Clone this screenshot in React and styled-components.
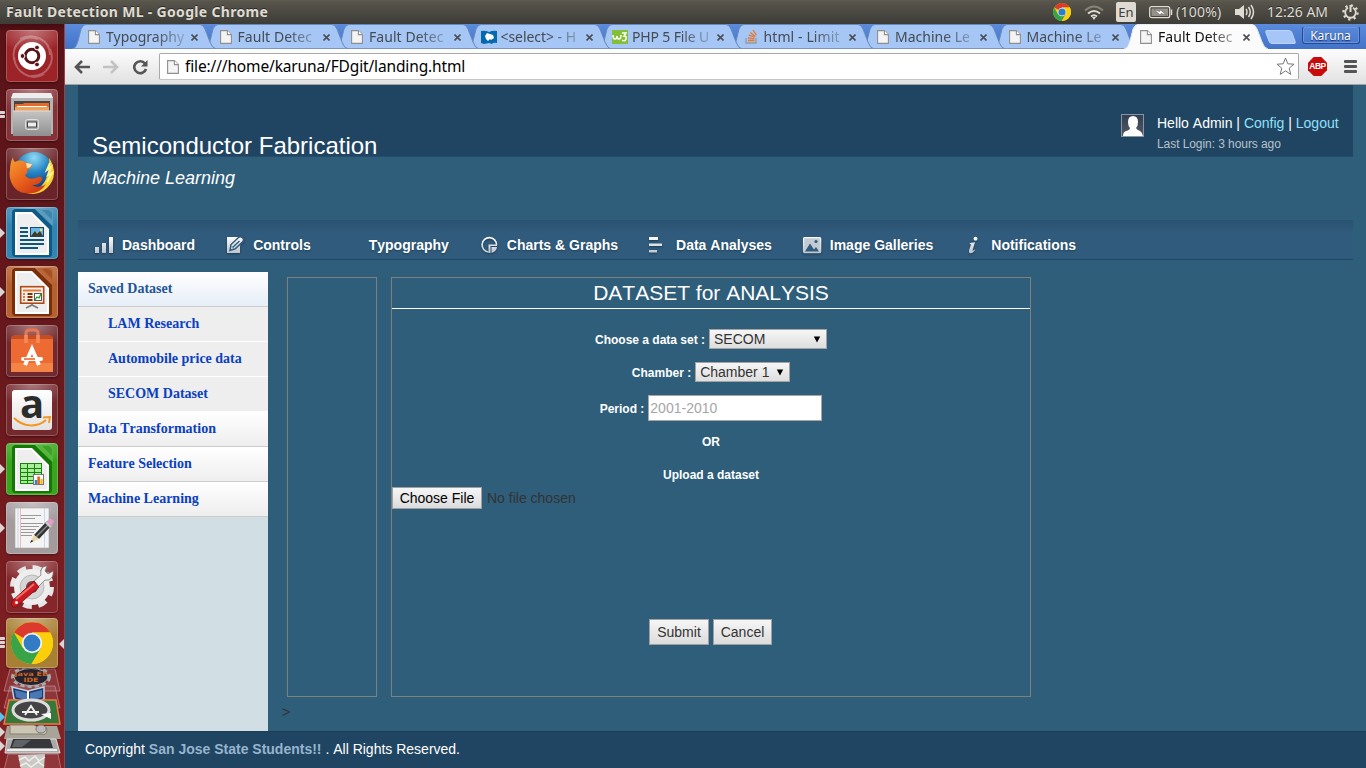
import React from "react";
import styled, { createGlobalStyle } from "styled-components";

const SANS = '"Liberation Sans", Arial, sans-serif';
const SERIF = '"Liberation Serif", "Times New Roman", serif';
const SYSTEM = '"Noto Sans", "Open Sans", sans-serif';

const GlobalStyle = createGlobalStyle`
  * { box-sizing: border-box; }
  html, body { margin: 0; padding: 0; height: 768px; overflow: hidden; }
  svg { display: block; flex: none; }
`;

/* ---------- desktop shell ---------- */

const Desktop = styled.div`
  width: 1366px;
  height: 768px;
  display: flex;
  flex-direction: column;
  overflow: hidden;
  font-family: ${SANS};
`;

const Panel = styled.header`
  height: 24px;
  flex: none;
  display: flex;
  align-items: center;
  justify-content: space-between;
  padding: 0 7px 0 6px;
  background: linear-gradient(#5d5a4f 0, #55534a 3px, #3d3c37 100%);
  color: #dfdbd2;
  font: 14px/24px ${SYSTEM};
  text-shadow: 0 -1px 0 #2c2b28;
`;

const WindowTitle = styled.div`
  font-weight: 700;
  font-size: 14px;
  letter-spacing: 0.32px;
  white-space: nowrap;
`;

const Indicators = styled.div`
  display: flex;
  align-items: center;
  height: 24px;
`;

const PanelText = styled.span`
  width: ${(p) => p.$w}px;
  margin-left: ${(p) => p.$gap}px;
  letter-spacing: ${(p) => p.$ls || 0}px;
  white-space: nowrap;
`;

const IndicatorIcon = styled.span`
  margin-left: ${(p) => p.$gap || 0}px;
`;

const LanguageBadge = styled.span`
  width: 20px;
  height: 20px;
  margin-left: 12px;
  border-radius: 2px;
  background: #dfdbd2;
  color: #3c3b37;
  font-size: 13px;
  line-height: 20px;
  text-align: center;
  text-shadow: none;
`;

const Workspace = styled.div`
  flex: 1;
  min-height: 0;
  display: flex;
`;

/* ---------- launcher ---------- */

const Launcher = styled.aside`
  width: 65px;
  flex: none;
  display: flex;
  flex-direction: column;
  align-items: center;
  padding-top: 6px;
  background: linear-gradient(#460b10 0, #591317 8px, #5f161a 180px, #6c191d 400px, #7c1f22 600px, #842124 100%);
  border-right: 1px solid #974448;
  overflow: hidden;
`;

const Tile = styled.div`
  position: relative;
  flex: none;
  width: 52px;
  height: 52px;
  margin-bottom: 7px;
  display: flex;
  align-items: center;
  justify-content: center;
  border-radius: 4px;
  background: radial-gradient(ellipse 70% 45% at 50% 0, rgba(255, 255, 255, 0.38), transparent), ${(p) => p.$bg};
  box-shadow: inset 0 0 0 1px rgba(255, 255, 255, 0.22), 0 1px 2px rgba(0, 0, 0, 0.4);
`;

const ChromeTile = styled(Tile)`
  height: 50px;
  margin: -2px 0 0;
  z-index: 1;
`;

const Pip = styled.i`
  position: absolute;
  left: -6px;
  top: 21px;
  width: 5px;
  height: 10px;
  background: #dcd3d3;
  clip-path: polygon(0 0, 100% 50%, 0 100%);
`;

const PipRight = styled(Pip)`
  left: 53px;
  clip-path: polygon(100% 0, 0 50%, 100% 100%);
`;

const PipBars = styled.span`
  position: absolute;
  left: -6px;
  top: ${(p) => (p.$n === 3 ? 19 : 22)}px;
  display: flex;
  flex-direction: column;
  gap: 1px;
`;

const PipBar = styled.i`
  width: 5px;
  height: 3px;
  border-radius: 0 1px 1px 0;
  background: #dcd3d3;
`;

function Bars({ n }) {
  return (
    <PipBars $n={n}>
      {Array.from({ length: n }, (_, i) => <PipBar key={i} />)}
    </PipBars>
  );
}

function DashIcon() {
  return (
    <svg width="52" height="52" viewBox="0 0 52 52" fill="none">
      <path d="M8 30C5 14 18 4 32 9M44 19c6 14-4 28-19 27M14 9C28 2 44 10 44 25M38 44C25 52 9 42 8 27" stroke="#fff" strokeOpacity=".28" strokeWidth="2" />
      <circle cx="26" cy="26" r="14" fill="#fff" />
      <circle cx="26" cy="26" r="6.800" stroke="#591317" strokeWidth="3" />
      <g fill="#591317" stroke="#fff" strokeWidth="1"><circle cx="16.500" cy="26" r="2.400" /><circle cx="31" cy="17.500" r="2.400" /><circle cx="31" cy="34.500" r="2.400" /></g>
    </svg>
  );
}

function FilesIcon() {
  return (
    <svg width="52" height="52" viewBox="0 0 52 52">
      <defs><linearGradient id="fi" x2="0" y2="1"><stop stopColor="#c4c4c4" /><stop offset="1" stopColor="#8f8f8f" /></linearGradient></defs>
      <path d="M7 4h38l2 6v35H5V10z" fill="#b4b4b4" />
      <path d="M7 4h38l2 5H5z" fill="#eee" />
      <rect x="8" y="12" width="36" height="12" fill="#4a4440" />
      <path d="M9 15h8l1-1h25v9H9z" fill="#e4692a" /><path d="M9 18h34v6H9z" fill="#efa25a" /><path d="M11 17h30v1H11z" fill="#fff" />
      <path d="M7 22h38v25H7z" fill="url(#fi)" /><path d="M7 21.5h38v1H7z" fill="#ddd" />
      <rect x="19.5" y="30.500" width="13" height="10" rx="2" fill="#aaa" stroke="#e0e0e0" />
      <rect x="21.500" y="33" width="9" height="5" fill="#eee" stroke="#444" />
    </svg>
  );
}

function FirefoxIcon() {
  return (
    <svg width="52" height="52" viewBox="0 0 52 52">
      <defs>
        <radialGradient id="fg" cx=".5" cy=".15" r=".8"><stop stopColor="#8fdcf5" /><stop offset=".5" stopColor="#2583c4" /><stop offset="1" stopColor="#133a7c" /></radialGradient>
        <linearGradient id="ff" x2=".7" y2="1"><stop stopColor="#f7a130" /><stop offset=".6" stopColor="#e8601c" /><stop offset="1" stopColor="#cf3a15" /></linearGradient>
      </defs>
      <circle cx="28" cy="23" r="19" fill="url(#fg)" />
      <path d="M43 10c7 10 7 22-2 30-6 6-14 7-20 5 9-1 16-7 19-14 3-7 4-14 3-21z" fill="#f8d035" />
      <path d="M44 15l-3 7 4-3-3 8 4-2-5 9" fill="none" stroke="#fff38c" strokeWidth="2" />
      <path d="M7 9c0 3 1 4 2 5 4-2 8-2 11 1l6 1c0 3-2 5-5 6 1 2 0 4-2 5 3 5 8 4 13 2 3-1 5 1 4 3-3 5-7 5-10 5 4 3 10 2 14-1-4 7-12 11-21 9C8 44 2 32 4 22c0-5 1-9 3-13z" fill="url(#ff)" />
      <path d="M20 15l6 1c-1 3-3 4-5 4z" fill="#ffe3b0" />
    </svg>
  );
}

function OfficeDoc({ frame, corner, children }) {
  return (
    <svg width="52" height="52" viewBox="0 0 52 52">
      <path d="M10 2h19l17 17v28q0 3-3 3H10q-4 0-4-4V6q0-4 4-4z" fill={frame} />
      <path d="M30 2h14q3 0 3 3v14z" fill={corner} />
      <path d="M36 3h7l3 3v7z" fill={frame} fillOpacity=".35" />
      <path d="M9 5h17l17 17v26H9z" fill="#fff" />
      <path d="M11 7h14l16 16v23H11z" fill="#eee" />
      {children}
    </svg>
  );
}

const WriterIcon = () => (
  <OfficeDoc frame="#0c5a86" corner="#5b9dc1">
    <path d="M14 21h8m-8 4h8m-8 4h8m-8 4h24m-24 4h24m-24 4h18" stroke="#0e557f" strokeWidth="1.900" />
    <rect x="24.500" y="20.500" width="13" height="9" fill="#6ab7e5" stroke="#164a6c" />
    <path d="M25 29l4-5 2 3 3-3 3 5z" fill="#3f3c22" /><circle cx="35" cy="23" r="1.200" fill="#ffe25e" />
  </OfficeDoc>
);

const ImpressIcon = () => (
  <OfficeDoc frame="#7d2e08" corner="#b96535">
    <rect x="14.700" y="20.700" width="23" height="16.500" fill="#fff1e7" stroke="#ad4a19" strokeWidth="1.600" />
    <path d="M17 23.500h18v2H17z" fill="#df7c44" /><path d="M21.500 28h5m-5 3h5m-5 3h5" stroke="#842f09" strokeWidth="1.800" /><path d="M17 28h2m-2 3h2m-2 3h2" stroke="#df7c44" strokeWidth="1.800" />
    <rect x="28.500" y="27.500" width="7" height="7" fill="#fff" stroke="#555" /><path d="M29 34l2-3 2 1 2-4" fill="none" stroke="#14a31c" strokeWidth="1.300" />
    <path d="M26 38v2m0-1l-6 3m6-3l6 3" stroke="#777" strokeWidth="1.500" />
  </OfficeDoc>
);

const CalcIcon = () => (
  <OfficeDoc frame="#147806" corner="#54b73c">
    <rect x="14.500" y="20.500" width="21" height="20" fill="#a8ec9c" stroke="#168306" />
    <path d="M14 25.500h22M14 29.500h22M14 33.500h22M14 37.500h22M21.500 20v21M28.500 20v21" stroke="#168306" />
    <rect x="27.500" y="31.500" width="10" height="10" fill="#fff" stroke="#777" /><path d="M30 41v-4" stroke="#2687d5" strokeWidth="2.500" /><path d="M32.600 41v-7.500" stroke="#e05d11" strokeWidth="2.500" /><path d="M35.500 41v-5" stroke="#f6b700" strokeWidth="2.200" />
  </OfficeDoc>
);

function SoftwareIcon() {
  return (
    <svg width="52" height="52" viewBox="0 0 52 52" fill="none">
      <path d="M5 12l3-2h36l3 2v4H5z" fill="#c44e20" />
      <path d="M20 18V8q0-3 4-3h4q4 0 4 3v10" stroke="#eb7650" strokeWidth="3" />
      <path d="M5 14h42v33H5z" fill="#ed6a33" /><path d="M5 38h42v9H5z" fill="#f48445" />
      <path d="M20 10v8m12-8v8" stroke="#f28b62" strokeWidth="3.500" />
      <path d="M19 40l7-16 7 16" stroke="#fff" strokeWidth="4" /><path d="M17 34h18" stroke="#fff" strokeWidth="4" strokeLinecap="round" /><path d="M18 34h11" stroke="#ed5a22" strokeWidth="1.500" />
    </svg>
  );
}

const AmazonPlate = styled.div`
  width: 40px;
  height: 40px;
  border-radius: 3px;
  background: linear-gradient(#fff, #e2e2e2);
  display: flex;
  flex-direction: column;
  align-items: center;
  color: #2c2c2c;
  font: 700 40px/26px "Open Sans", sans-serif;
`;

function AmazonIcon() {
  return (
    <AmazonPlate>
      a
      <svg width="40" height="12" viewBox="0 0 40 12" fill="none">
        <path d="M2 2c9 9 23 10 32 2" stroke="#f6941d" strokeWidth="2" /><path d="M31 1.500l7-.5-1 6" stroke="#f6941d" strokeWidth="1.800" />
      </svg>
    </AmazonPlate>
  );
}

function EditorIcon() {
  return (
    <svg width="52" height="52" viewBox="0 0 52 52" fill="none">
      <path d="M9 6h34v40H9z" fill="#f4f4f4" stroke="#aaa" strokeWidth=".6" />
      <path d="M14.500 6v40" stroke="#f3a9aa" strokeWidth=".8" /><path d="M38.500 6v40M12 6v40" stroke="#b2cbea" strokeWidth=".7" />
      <path d="M15 13.500h20M15 16.500h14m-14 5h22M15 24.500h18M15 27.500h15M15 30.500h13M15 33.500h11" stroke="#999" strokeWidth="1" />
      <path d="M28 33L41 19l4.500 4.500L33 37z" fill="#333" /><path d="M30 35l13-13" stroke="#8b8b8b" strokeWidth="1.400" />
      <path d="M28 33l-4 8 9-4z" fill="#e8d8a8" /><path d="M24 41l1.500-3 2 1z" fill="#222" />
      <path d="M39 21l2-2 5 5-2 2z" fill="#c7c7c7" /><path d="M41 19l2-2q2-1 4 1t0 3l-2 3z" fill="#e79bc6" />
    </svg>
  );
}

function SettingsIcon() {
  return (
    <svg width="52" height="52" viewBox="0 0 52 52" fill="none">
      <circle cx="26" cy="26" r="19" stroke="#e6e6e6" strokeWidth="6" strokeDasharray="8.500 6.420" />
      <circle cx="26" cy="26" r="15" fill="#ddd" stroke="#eee" strokeWidth="6" />
      <circle cx="26" cy="26" r="12" fill="#d6d6d6" stroke="#bbb" strokeWidth="1" /><circle cx="26" cy="26" r="6" fill="#7a4042" />
      <path d="M28 20l7-6c-1-5 1-9 6-9l-2 5 3 3 5-3c1 6-3 10-8 9l-7 7z" fill="#f0f0f0" stroke="#777" strokeWidth=".8" />
      <path d="M28 20l5 6-23 20q-6 1-4-6z" fill="#cb1a20" stroke="#82090e" strokeWidth=".8" /><path d="M10 38l18-15" stroke="#f16c6c" strokeWidth="2" />
      <circle cx="10.500" cy="41.500" r="1.500" fill="#fff" />
    </svg>
  );
}

function ChromeLogo({ size }) {
  return (
    <svg width={size} height={size} viewBox="0 0 42 42">
      <circle cx="21" cy="21" r="21" fill="#f9cf0a" />
      <path d="M21 21L3 10.500A21 21 0 0 1 39.200 10.500H21z" fill="#dc3a2d" />
      <path d="M21 21l-9.200 5L2.800 10.500A21 21 0 0 0 20.500 42L30 26z" fill="#39a447" />
      <path d="M39.200 10.500H21L30 26l-9.500 16A21 21 0 0 0 39.200 10.500z" fill="#fbcf0c" />
      <circle cx="21" cy="21" r="10.200" fill="#f1f1f1" /><circle cx="21" cy="21" r="8.400" fill="#317cc4" />
    </svg>
  );
}

function FoldedStack() {
  return (
    <svg width="65" height="101" viewBox="0 0 65 101" fill="none">
      <g stroke="#d7a9ab" strokeOpacity=".5" fill="#fff" fillOpacity=".1">
        <path d="M10 1h45l5 22H4z" /><path d="M10 18h45l5 22H4z" /><path d="M8 86h50l4 20H3z" />
      </g>
      <ellipse cx="31" cy="9" rx="18" ry="9" stroke="#aaa" strokeWidth="4" strokeDasharray="4 3" />
      <ellipse cx="31" cy="9" rx="17" ry="8.500" fill="#27212e" stroke="#aaa" />
      <text x="31" y="8" textAnchor="middle" fontFamily="DejaVu Sans" fontWeight="700" fontSize="6" fill="#c8692b" textLength="33" lengthAdjust="spacingAndGlyphs">Java EE</text>
      <text x="31" y="13.500" textAnchor="middle" fontFamily="DejaVu Sans" fontWeight="700" fontSize="6" fill="#d0671c" textLength="15" lengthAdjust="spacingAndGlyphs">IDE</text>
      <path d="M12 19l16 4 16-4v12l-14 7-16-7z" fill="#1d3b6d" stroke="#c5cfdd" strokeWidth="1.500" /><path d="M15 22l12 3v8l-11-4zM30 25l12-3v7l-12 5z" fill="#4a78b4" /><path d="M28 23v14" stroke="#fff" strokeWidth="2" />
      <path d="M9 32h47l4 24H4z" fill="#35783a" stroke="#ee7744" strokeWidth="1.500" />
      <ellipse cx="31" cy="42" rx="18" ry="10" fill="#444" stroke="#ddd" strokeWidth="3" />
      <path d="M25 47l6-9 6 9m-15-3h17" stroke="#eee" strokeWidth="2" /><path d="M41 46l10-1v6z" fill="#fff" />
      <path d="M7 58h50l4 13H4z" fill="#a8a498" /><path d="M10 57h24l5 3q8-4 8 2t-7 4H10z" fill="#cac6b3" stroke="#858071" /><ellipse cx="41" cy="61" rx="5" ry="4" fill="#bbb" stroke="#777" />
      <path d="M7 71h49l4 14H5z" fill="#aaa" stroke="#ddd" /><path d="M13 71h37l3 9H10z" fill="#35373b" /><path d="M15 72h16l-9 7H12z" fill="#5f6267" /><path d="M7 82h50" stroke="#eee" strokeWidth="2" />
      <path d="M18 87l27-1-1 15H21z" fill="#ccc8c4" /><path d="M19 92l6-3 4 4 6-5 4 5 6-4M20 98l6-3 5 4 7-5 6 4" stroke="#eee" strokeWidth="1.500" />
      <path d="M0 44l5 5-5 5z" fill="#55c3ee" /><path d="M0 59l5 5-5 5zM0 73l5 5-5 5z" fill="#dcd3d3" />
    </svg>
  );
}

/* ---------- browser chrome ---------- */

const Browser = styled.main`
  flex: 1;
  min-width: 0;
  display: flex;
  flex-direction: column;
`;

const TabStrip = styled.div`
  height: 25px;
  flex: none;
  display: flex;
  padding-left: 7px;
  background: linear-gradient(#5b8bdc, #4273c8);
  overflow: hidden;
`;

const Tab = styled.div`
  position: relative;
  flex: none;
  z-index: ${(p) => p.$z};
  width: 131.500px;
  height: 25px;
  display: flex;
  align-items: center;
  padding-left: 14px;
  color: ${(p) => (p.$active ? "#111" : "#454b52")};
  font: 14px/24px ${SYSTEM};
`;

const TabShape = styled.svg`
  position: absolute;
  left: 0;
  top: 0;
  z-index: -1;
`;

const TabIcon = styled.span`
  width: 16px;
  display: flex;
  justify-content: center;
`;

const TabLabel = styled.span`
  width: 79px;
  margin: 1px 0 0 4px;
  white-space: nowrap;
  letter-spacing: ${(p) => p.$ls || 0}px;
  mask-image: linear-gradient(90deg, #000 62%, rgba(0, 0, 0, 0.25) 100%);
`;

const CloseMark = styled.svg`
  margin: 1px 0 0 6px;
`;

const NewTab = styled.span`
  width: 27px;
  height: 14px;
  margin: 6px 0 0 11px;
  border: 1px solid #bcd4f8;
  border-radius: 3px;
  background: #a5c6f6;
  transform: skewX(20deg);
`;

const ProfileButton = styled.span`
  width: 58px;
  height: 18px;
  margin: 2px 0 0 8px;
  border: 1px solid #254a91;
  border-top-color: #5d88d3;
  border-radius: 3px;
  box-shadow: inset 0 0 0 1px #6b94dc;
  color: #fff;
  font: 12px/18px ${SYSTEM};
  text-align: center;
  text-shadow: 0 1px 1px #122c5f;
`;

const Toolbar = styled.div`
  height: 36px;
  flex: none;
  display: flex;
  align-items: center;
  padding: 0 8px 0 9px;
  background: linear-gradient(#fdfdfd, #e1e1e1);
  border-bottom: 1px solid #a2a2a2;
`;

const NavButton = styled.span`
  margin-right: ${(p) => p.$gap}px;
`;

const AddressBar = styled.div`
  flex: none;
  width: 1140px;
  height: 27px;
  display: flex;
  align-items: center;
  padding: 0 3px 0 7px;
  background: #fff;
  border: 1px solid #a9a9a9;
  border-bottom-color: #c5c5c5;
  border-radius: 2px;
  font: 15.500px/23px ${SYSTEM};
  color: #000;
`;

const Url = styled.span`
  flex: 1;
  height: 24px;
  margin-left: 6px;
  letter-spacing: -0.14px;
`;

const AdBlock = styled.span`
  width: 19px;
  height: 19px;
  margin-left: 9px;
  background: #c90a0a;
  clip-path: polygon(30% 0, 70% 0, 100% 30%, 100% 70%, 70% 100%, 30% 100%, 0 70%, 0 30%);
  color: #fff;
  font: 700 8.500px/19px ${SANS};
  letter-spacing: -0.5px;
  text-align: center;
`;

const MenuButton = styled.span`
  display: flex;
  flex-direction: column;
  gap: 2px;
  margin-left: 17px;
`;

const MenuLine = styled.i`
  width: 13px;
  height: 3px;
  border-radius: 1px;
  background: #555;
`;

const PageGlyph = () => (
  <svg width="12" height="14" viewBox="0 0 12 14"><path d="M.6.600h6.800l4 4v8.800H.6z" fill="#f4f4f4" stroke="#8f8f8f" strokeWidth="1.100" /><path d="M7.400.600v4h4" fill="#fff" stroke="#8f8f8f" strokeWidth="1.100" /></svg>
);

const MdnGlyph = () => (
  <svg width="16" height="14" viewBox="0 0 16 14"><path d="M0 1q4-1 8 1 4-2 8-1v12q-4-1-5 1l-3-1-5 1-3-1z" fill="#0569ae" /><path d="M4 6l2-3 3 1 3 1 1 3-3 2-1-1-2 2-2-2z" fill="#fff" /></svg>
);

const W3Glyph = () => (
  <svg width="16" height="14" viewBox="0 0 16 14" fill="none"><path d="M0 0h16v14H0z" fill="#83bf38" /><path d="M1 5q0 4 2 4t2-3q0 3 2 3t2-4M10 3h4l-2 3q3 0 2 3t-4 1" stroke="#fff" strokeWidth="1.500" /></svg>
);

const StackGlyph = () => (
  <svg width="13" height="15" viewBox="0 0 13 15" fill="none"><path d="M1 9v5h10V9" stroke="#999" strokeWidth="1.300" /><path d="M3 11.500h6.500M3 9l6.500.800M3.700 6.200l6 2M5.300 3.500l5 4M8 1l3.400 5.200" stroke="#e9782a" strokeWidth="1.300" /></svg>
);

const tabs = [
  { label: "Typography", icon: PageGlyph },
  { label: "Fault Detec", icon: PageGlyph, ls: 0.05 },
  { label: "Fault Detec", icon: PageGlyph, ls: 0.05 },
  { label: "<select> - H", icon: MdnGlyph, ls: -0.05 },
  { label: "PHP 5 File U", icon: W3Glyph, ls: -0.15 },
  { label: "html - Limit", icon: StackGlyph, ls: 0.1 },
  { label: "Machine Le", icon: PageGlyph, ls: 0 },
  { label: "Machine Le", icon: PageGlyph, ls: 0 },
  { label: "Fault Detec", icon: PageGlyph, ls: 0.05, active: true },
];

function BrowserTab({ tab, index }) {
  const Icon = tab.icon;
  return (
    <Tab $active={tab.active} $z={tab.active ? 20 : 10 - index}>
      <TabShape width="145" height="25" viewBox="0 0 145 25">
        <path d="M0 25C4 24 4 22 6 17L9 5Q11 .500 14 .500H128Q131 .500 133 5L138 18Q140 24 144 25" fill={tab.active ? "#fbfbfb" : "#a6c7f6"} stroke={tab.active ? "#e4ecf7" : "#6489bd"} strokeWidth="1" />
        {!tab.active && <path d="M2 24.500h141" stroke="#7b97bf" />}
      </TabShape>
      <TabIcon><Icon /></TabIcon>
      <TabLabel $ls={tab.ls}>{tab.label}</TabLabel>
      <CloseMark width="7" height="7" viewBox="0 0 7 7"><path d="M.5.500l6 6m0-6l-6 6" stroke="#4b4f55" strokeWidth="1.600" /></CloseMark>
    </Tab>
  );
}

/* ---------- web page ---------- */

const Page = styled.div`
  flex: 1;
  min-height: 0;
  display: flex;
  flex-direction: column;
  background: #2e5e7a;
  font-kerning: none;
`;

const Container = styled.div`
  flex: 1;
  min-height: 0;
  display: flex;
  flex-direction: column;
  padding: 0 13px;
`;

const Banner = styled.div`
  height: 72px;
  flex: none;
  display: flex;
  justify-content: space-between;
  padding: 0 14px;
  background: #204562;
  border-bottom: 1px solid #234d6b;
`;

const SiteTitle = styled.h1`
  margin: 47px 0 0;
  color: #fff;
  font: 400 24px/28px ${SANS};
  font-kerning: none;
`;

const Tagline = styled.h2`
  flex: none;
  height: 63px;
  margin: 0;
  padding: 10px 14px 0;
  color: #fff;
  font: italic 400 18px/22px ${SANS};
  font-kerning: none;
`;

const UserBox = styled.div`
  display: flex;
  gap: 13px;
  padding-top: 29px;
`;

const Greeting = styled.div`
  width: 182px;
  color: #fff;
  font: 14px/18px ${SANS};
  font-kerning: none;
  white-space: nowrap;
`;

const HeaderLink = styled.a`
  color: #8fe0fb;
`;

const LastLogin = styled.div`
  margin-top: 3px;
  color: #b8c1c9;
  font-size: 12px;
  letter-spacing: -0.07px;
`;

const MainNav = styled.nav`
  height: 40px;
  flex: none;
  display: flex;
  padding-top: 5px;
  background: linear-gradient(#295172 0, #315b7c 13px, #315b7c 100%);
  border-bottom: 1px solid #204562;
`;

const NavItem = styled.a`
  height: 40px;
  display: flex;
  align-items: center;
  padding-right: 14px;
  color: #fff;
  font: 700 14px/20px ${SANS};
  font-kerning: none;
  text-shadow: 0 1px 2px #1e4059;
  svg { filter: drop-shadow(0 1px 1px #1c3b54); }
`;

const NavIconSlot = styled.span`
  width: 44px;
  padding-left: 16px;
`;

const Columns = styled.div`
  flex: 1;
  min-height: 0;
  display: flex;
  padding-top: 12px;
`;

const Sidebar = styled.aside`
  width: 190px;
  flex: none;
  background: #d1dee3;
`;

const SideItem = styled.a`
  display: block;
  height: 35px;
  padding-left: ${(p) => (p.$sub ? 30 : 10)}px;
  color: ${(p) => (p.$current ? "#1f5598" : "#0a40c2")};
  font: 700 14px/33px ${SERIF};
  font-kerning: none;
  background: ${(p) => (p.$sub ? "#eee" : p.$current ? "linear-gradient(#fff, #e6eef7)" : "linear-gradient(#fff, #eee)")};
  border-bottom: 1px solid ${(p) => (p.$last ? "#fff" : p.$sub ? "#fff" : "#ccc")};
`;

const Content = styled.section`
  padding: 5px 0 0 19px;
`;

const BoxRow = styled.div`
  display: flex;
  gap: 14px;
`;

const OutlineBox = styled.div`
  width: ${(p) => p.$w}px;
  height: 420px;
  border: 1px solid #7f7f7f;
`;

const BoxTitle = styled.h3`
  height: 31px;
  margin: 0 0 20px;
  border-bottom: 1px solid #fff;
  color: #fff;
  font: 400 21px/30px ${SANS};
  font-kerning: none;
  text-align: center;
`;

const FormRow = styled.div`
  height: ${(p) => p.$h}px;
  margin-bottom: ${(p) => p.$mb}px;
  display: flex;
  align-items: center;
  justify-content: center;
  gap: 4px;
`;

const ButtonRow = styled(FormRow)`
  padding-right: 1px;
`;

const FieldLabel = styled.label`
  padding-top: 2px;
  color: #fff;
  font: 700 12px/16px ${SANS};
  white-space: nowrap;
`;

const SelectBox = styled.button`
  width: ${(p) => p.$w}px;
  height: 20px;
  display: flex;
  align-items: center;
  justify-content: space-between;
  padding: 0 5px 0 4px;
  border: 1px solid #a3a3a3;
  background: linear-gradient(#f6f6f6, #dedede);
  color: #333;
  font: 14px/18px ${SANS};
`;

const TextInput = styled.input`
  width: 174px;
  height: 26px;
  padding: 0 1px;
  border: 1px solid #a5a5a5;
  background: #fff;
  font: 14px/20px ${SANS};
  &::placeholder { color: #a6a6a6; opacity: 1; }
`;

const PushButton = styled.button`
  width: ${(p) => p.$w}px;
  height: ${(p) => p.$h}px;
  padding: 0;
  border: 1px solid #a0a0a0;
  background: linear-gradient(#f6f6f6, #dcdcdc);
  color: ${(p) => p.$color || "#333"};
  font: 14px/18px ${SANS};
`;

const FileRow = styled.div`
  display: flex;
  align-items: center;
  gap: 5px;
  margin-bottom: 110px;
  color: #333;
  font: 14px/22px ${SANS};
`;

const StrayText = styled.div`
  margin: 5px 0 0 -5px;
  color: #333;
  font: 14px/20px ${SANS};
`;

const Footer = styled.footer`
  height: 37px;
  flex: none;
  padding-left: 20px;
  background: #204562;
  border-top: 1px solid #1b3d57;
  color: #fff;
  font: 14px/35px ${SANS};
  font-kerning: none;
`;

const FooterLink = styled.b`
  color: #97b4cd;
`;

const Grad = () => (
  <defs><linearGradient id="ng" x2="0" y2="18" gradientUnits="userSpaceOnUse"><stop stopColor="#fff" /><stop offset="1" stopColor="#b9c2cb" /></linearGradient></defs>
);

const navIcons = {
  bars: <path d="M1 11h4v6H1zM8 7h4v10H8zM15 1h4v16h-4z" fill="url(#ng)" />,
  edit: (
    <>
      <path d="M2 1h14v3l-1 7v6H2z" fill="url(#ng)" />
      <path d="M5 14.500l1-6 7.500-7q2-1.500 4 .3t.2 4l-7.500 7z" fill="url(#ng)" stroke="#315b7c" strokeWidth="1.500" /><path d="M7.500 11.500l7-6.500" stroke="#315b7c" strokeWidth="1.400" />
    </>
  ),
  pie: (
    <>
      <path d="M9 16A7.200 7.200 0 1 1 17 9" fill="none" stroke="url(#ng)" strokeWidth="1.700" transform="translate(.5 0)" />
      <path d="M9.500 17V8.500H18V10h-6.500v7z" fill="url(#ng)" /><path d="M12.500 11H18q-.5 4.500-5.500 6z" fill="url(#ng)" />
    </>
  ),
  lines: <path d="M1 1h9v3H1zM1 7.500h13v2.500H1zM1 14h8v2.500H1z" fill="url(#ng)" />,
  image: (
    <>
      <rect x="1.600" y="1.600" width="17" height="15" fill="#c2cad3" stroke="url(#ng)" strokeWidth="1.400" rx="1" />
      <path d="M3 15.500l5-8 4 6 2-2.500 3 4.500z" fill="#315b7c" /><circle cx="14" cy="5.500" r="1.600" fill="#315b7c" />
    </>
  ),
  info: (
    <>
      <circle cx="12.500" cy="2.800" r="2" fill="url(#ng)" /><path d="M7 7l5-.8-2.500 8.300q.5.500 2-1l.5.700q-2.500 3.300-5 3-1.500-.5-1-2.700L8 8.200l-1.400-.2z" fill="url(#ng)" />
    </>
  ),
};

const navEntries = [
  ["Dashboard", "bars"],
  ["Controls", "edit"],
  ["Typography", null],
  ["Charts & Graphs", "pie"],
  ["Data Analyses", "lines"],
  ["Image Galleries", "image"],
  ["Notifications", "info"],
];

function NavIcon({ name }) {
  return (
    <svg width="20" height="18" viewBox="0 0 20 18">
      <Grad />
      {navIcons[name]}
    </svg>
  );
}

function Caret() {
  return <svg width="8" height="7" viewBox="0 0 8 7"><path d="M.8.500h6.400L4 6.500z" fill="#000" /></svg>;
}

function Avatar() {
  return (
    <svg width="23" height="23" viewBox="0 0 23 23">
      <defs><linearGradient id="av" x2="0" y2="1"><stop stopColor="#2d4057" /><stop offset="1" stopColor="#56585f" /></linearGradient></defs>
      <rect x=".5" y=".5" width="22" height="22" fill="url(#av)" stroke="#8d949d" />
      <path d="M7 8q0-6 5-6t5 6q0 4-2 6 1 2 4 3 2 1 3 5H2q0-4 3-5 4-1 4-3-2-2-2-6z" fill="#fff" />
    </svg>
  );
}

export default function App() {
  return (
    <Desktop>
      <GlobalStyle />
      <Panel>
        <WindowTitle>Fault Detection ML - Google Chrome</WindowTitle>
        <Indicators>
          <ChromeLogo size={18} />
          <IndicatorIcon $gap={13}>
            <svg width="20" height="15" viewBox="0 0 20 15" fill="none" strokeWidth="2">
              <path d="M1 5.500q9-8 18 0" stroke="#85827a" /><path d="M4 8.500q6-5 12 0M7 11.500q3-2.500 6 0" stroke="#dfdbd2" /><path d="M8 12h4l-2 3z" fill="#dfdbd2" />
            </svg>
          </IndicatorIcon>
          <LanguageBadge>En</LanguageBadge>
          <IndicatorIcon $gap={13}>
            <svg width="24" height="13" viewBox="0 0 24 13" fill="none">
              <rect x=".7" y=".7" width="20" height="11" rx="2" stroke="#dfdbd2" strokeWidth="1.300" /><path d="M22.500 3.500v5.500" stroke="#dfdbd2" strokeWidth="1.500" /><path d="M2.500 2.500h16.500v7.500H2.500z" fill="#dfdbd2" fillOpacity=".5" /><path d="M5 3.500l5.500 2 1-1.500 6 5-5.500-1.500-1 1.500z" fill="#fff" stroke="#504e48" strokeWidth=".5" />
            </svg>
          </IndicatorIcon>
          <PanelText $w={46} $gap={3} $ls={0.25}>(100%)</PanelText>
          <IndicatorIcon $gap={12}>
            <svg width="21" height="16" viewBox="0 0 21 16" fill="none">
              <path d="M1 5h4l5-4v14l-5-4H1z" fill="#dfdbd2" /><path d="M12 5q2 3 0 6m2.500-8q3.500 5 0 10m2.500-12q5 7 0 14" stroke="#dfdbd2" strokeWidth="1.500" />
            </svg>
          </IndicatorIcon>
          <PanelText $w={62} $gap={12}>12:26 AM</PanelText>
          <IndicatorIcon $gap={13}>
            <svg width="17" height="17" viewBox="0 0 17 17" fill="none" stroke="#dfdbd2">
              <circle cx="8.500" cy="8.500" r="7" strokeWidth="2.400" strokeDasharray="2.200 3.300" /><path d="M6 3.800a5.300 5.300 0 1 0 5 0" strokeWidth="1.800" /><path d="M8.500 1v7" strokeWidth="2" />
            </svg>
          </IndicatorIcon>
        </Indicators>
      </Panel>
      <Workspace>
        <Launcher>
          <Tile $bg="#9c2328"><DashIcon /></Tile>
          <Tile $bg="#853238"><FilesIcon /><Bars n={2} /></Tile>
          <Tile $bg="#692429"><FirefoxIcon /></Tile>
          <Tile $bg="#3384b1"><WriterIcon /><Pip /></Tile>
          <Tile $bg="#b4602f"><ImpressIcon /><Pip /></Tile>
          <Tile $bg="#702a2f"><SoftwareIcon /></Tile>
          <Tile $bg="#74292e"><AmazonIcon /></Tile>
          <Tile $bg="#3aa41f"><CalcIcon /><Pip /></Tile>
          <Tile $bg="#a49b9d"><EditorIcon /><Pip /></Tile>
          <Tile $bg="#84262a"><SettingsIcon /></Tile>
          <ChromeTile $bg="#a97f33"><ChromeLogo size={42} /><Bars n={3} /><PipRight /></ChromeTile>
          <FoldedStack />
        </Launcher>
        <Browser>
          <TabStrip>
            {tabs.map((tab, i) => <BrowserTab key={i} tab={tab} index={i} />)}
            <NewTab />
            <ProfileButton>Karuna</ProfileButton>
          </TabStrip>
          <Toolbar>
            <NavButton $gap={13}>
              <svg width="16" height="14" viewBox="0 0 16 14" fill="none" stroke="#555" strokeWidth="2.600"><path d="M8 1L2 7l6 6M2 7h14" /></svg>
            </NavButton>
            <NavButton $gap={13}>
              <svg width="16" height="14" viewBox="0 0 16 14" fill="none" stroke="#c3c3c3" strokeWidth="2.600"><path d="M8 1l6 6-6 6M14 7H0" /></svg>
            </NavButton>
            <NavButton $gap={11}>
              <svg width="16" height="16" viewBox="0 0 16 16" fill="none"><path d="M13 4.500A6 6 0 1 0 14 10" stroke="#555" strokeWidth="2.600" /><path d="M15.500 1v6.500H9z" fill="#555" /></svg>
            </NavButton>
            <AddressBar>
              <PageGlyph />
              <Url>file:///home/karuna/FDgit/landing.html</Url>
              <svg width="19" height="19" viewBox="0 0 19 19" fill="none" stroke="#777" strokeLinejoin="round"><path d="M9.500 1l2.300 5.800 6.200.400-4.800 4 1.600 6.200-5.300-3.500-5.300 3.500 1.600-6.200-4.800-4 6.200-.4z" /></svg>
            </AddressBar>
            <AdBlock>ABP</AdBlock>
            <MenuButton><MenuLine /><MenuLine /><MenuLine /></MenuButton>
          </Toolbar>
          <Page>
            <Container>
              <Banner>
                <SiteTitle>Semiconductor Fabrication</SiteTitle>
                <UserBox>
                  <Avatar />
                  <Greeting>
                    Hello Admin | <HeaderLink>Config</HeaderLink> | <HeaderLink>Logout</HeaderLink>
                    <LastLogin>Last Login: 3 hours ago</LastLogin>
                  </Greeting>
                </UserBox>
              </Banner>
              <Tagline>Machine Learning</Tagline>
              <MainNav>
                {navEntries.map(([label, icon]) => (
                  <NavItem key={label}>
                    <NavIconSlot>{icon && <NavIcon name={icon} />}</NavIconSlot>
                    {label}
                  </NavItem>
                ))}
              </MainNav>
              <Columns>
                <Sidebar>
                  <SideItem $current>Saved Dataset</SideItem>
                  <SideItem $sub>LAM Research</SideItem>
                  <SideItem $sub>Automobile price data</SideItem>
                  <SideItem $sub $last>SECOM Dataset</SideItem>
                  <SideItem>Data Transformation</SideItem>
                  <SideItem>Feature Selection</SideItem>
                  <SideItem>Machine Learning</SideItem>
                </Sidebar>
                <Content>
                  <BoxRow>
                    <OutlineBox $w={90} />
                    <OutlineBox $w={640}>
                      <BoxTitle>DATASET for ANALYSIS</BoxTitle>
                      <FormRow $h={20} $mb={13}>
                        <FieldLabel>Choose a data set :</FieldLabel>
                        <SelectBox $w={118}>SECOM<Caret /></SelectBox>
                      </FormRow>
                      <FormRow $h={20} $mb={13}>
                        <FieldLabel>Chamber :</FieldLabel>
                        <SelectBox $w={95}>Chamber 1<Caret /></SelectBox>
                      </FormRow>
                      <FormRow $h={26} $mb={11}>
                        <FieldLabel>Period :</FieldLabel>
                        <TextInput placeholder="2001-2010" />
                      </FormRow>
                      <FormRow $h={18} $mb={15}><FieldLabel>OR</FieldLabel></FormRow>
                      <FormRow $h={18} $mb={4}><FieldLabel>Upload a dataset</FieldLabel></FormRow>
                      <FileRow>
                        <PushButton $w={90} $h={22} $color="#000">Choose File</PushButton>
                        No file chosen
                      </FileRow>
                      <ButtonRow $h={26} $mb={0}>
                        <PushButton $w={60} $h={26}>Submit</PushButton>
                        <PushButton $w={59} $h={26}>Cancel</PushButton>
                      </ButtonRow>
                    </OutlineBox>
                  </BoxRow>
                  <StrayText>&gt;</StrayText>
                </Content>
              </Columns>
            </Container>
            <Footer>Copyright <FooterLink>San Jose State Students!!</FooterLink> . All Rights Reserved.</Footer>
          </Page>
        </Browser>
      </Workspace>
    </Desktop>
  );
}
